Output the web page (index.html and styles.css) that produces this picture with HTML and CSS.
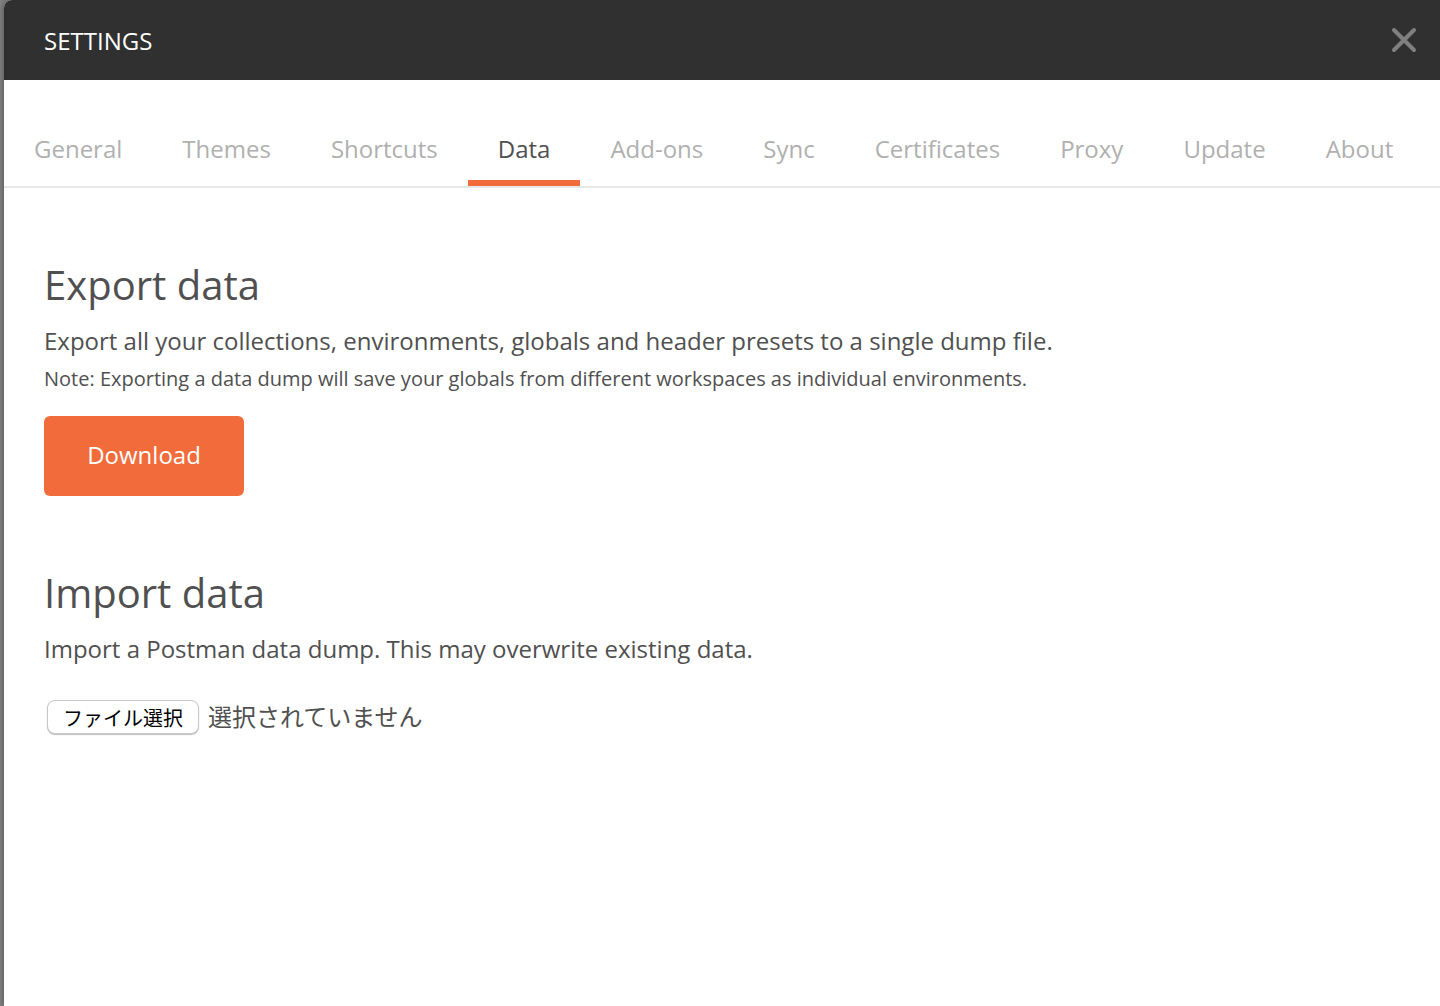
FILE: index.html
```html
<!DOCTYPE html>
<html lang="en">
<head>
<meta charset="utf-8">
<title>Settings</title>
<link rel="stylesheet" href="styles.css">
</head>
<body>
<main class="modal">
  <header class="modal-header">
    <h1 class="modal-title">SETTINGS</h1>
    <button class="close" type="button" aria-label="Close">
      <svg width="26" height="26" viewBox="0 0 26 26" fill="none" stroke="#808080" stroke-width="4" stroke-linecap="round"><path d="M3 3 23 23M23 3 3 23"/></svg>
    </button>
  </header>
  <nav class="tabs">
    <a class="tab" href="#general">General</a>
    <a class="tab" href="#themes">Themes</a>
    <a class="tab" href="#shortcuts">Shortcuts</a>
    <a class="tab active" href="#data" aria-current="page">Data</a>
    <a class="tab" href="#addons">Add-ons</a>
    <a class="tab" href="#sync">Sync</a>
    <a class="tab" href="#certificates">Certificates</a>
    <a class="tab" href="#proxy">Proxy</a>
    <a class="tab" href="#update">Update</a>
    <a class="tab" href="#about">About</a>
  </nav>
  <div class="content">
    <section class="section">
      <h2 class="heading">Export data</h2>
      <p class="text">Export all your collections, environments, globals and header presets to a single dump file.</p>
      <p class="note">Note: Exporting a data dump will save your globals from different workspaces as individual environments.</p>
      <button class="download" type="button">Download</button>
    </section>
    <section class="section">
      <h2 class="heading">Import data</h2>
      <p class="text">Import a Postman data dump. This may overwrite existing data.</p>
      <div class="file-row" lang="ja">
        <input class="file-input" id="import-file" type="file" aria-describedby="file-status">
        <label class="file-button" for="import-file">ファイル選択</label>
        <span class="file-status" id="file-status">選択されていません</span>
      </div>
    </section>
  </div>
</main>
</body>
</html>
```
FILE: styles.css
```css
* { box-sizing: border-box; }
body {
  margin: 0;
  min-height: 100vh;
  display: flex;
  padding-left: 4px;
  background: #828180;
  color: #505050;
  font-family: "Open Sans", "Noto Sans CJK JP", sans-serif;
  font-size: 24px;
}
h1, h2, p { margin: 0; font-weight: 400; }
button { font-family: inherit; }
.modal {
  flex: 1;
  background: #fff;
  border-top-left-radius: 8px;
  box-shadow: 0 0 6px rgba(0, 0, 0, 0.4);
}
.modal-header {
  display: flex;
  align-items: center;
  justify-content: space-between;
  height: 80px;
  padding: 0 23px 0 40px;
  border-top-left-radius: 8px;
  background: #303030;
}
.modal-title { padding-top: 2px; color: #fff; font-size: 24px; line-height: 36px; }
.close { padding: 0; border: 0; background: none; }
.close svg { display: block; }
.tabs {
  display: flex;
  padding-top: 32px;
  border-bottom: 2px solid #e8e8e8;
}
.tab {
  padding: 20px 30px 14px;
  border-bottom: 6px solid transparent;
  color: #b0b0b0;
  line-height: 34px;
  text-decoration: none;
  white-space: nowrap;
}
.tab.active { color: #505050; border-color: #f26b3a; }
.content {
  display: flex;
  flex-direction: column;
  gap: 67px;
  padding: 67px 40px;
}
.heading { font-size: 40px; line-height: 60px; }
.text { margin-top: 8px; line-height: 36px; }
.note { font-size: 20px; line-height: 40px; }
.download {
  display: block;
  width: 200px;
  height: 80px;
  margin-top: 17px;
  padding: 0 0 4px;
  border: 0;
  border-radius: 6px;
  background: #f26b3a;
  color: #fff;
  font-size: 24px;
}
.file-row {
  position: relative;
  display: flex;
  align-items: flex-start;
  gap: 9px;
  margin-top: 33px;
  padding-left: 3px;
  font-family: "Noto Sans CJK JP", sans-serif;
}
/* The native picker lies invisibly over its label. */
.file-input {
  position: absolute;
  width: 152px;
  height: 34px;
  opacity: 0;
}
.file-button {
  width: 152px;
  height: 34px;
  border: 1px solid #c8c8c8;
  border-radius: 8px;
  box-shadow: 0 1px 1px rgba(0, 0, 0, 0.25);
  background: #fff;
  color: #000;
  font-size: 20px;
  line-height: 34px;
  text-align: center;
}
.file-status { line-height: 32px; }
```
